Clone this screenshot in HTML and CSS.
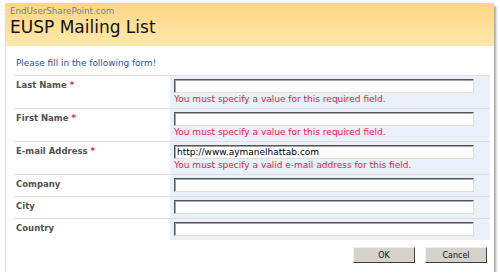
FILE: index.html
```html
<!DOCTYPE html>
<html lang="en">
<head>
  <meta charset="UTF-8" />
  <title>EUSP Mailing List</title>
  <link rel="stylesheet" href="styles.css">
</head>
<body>
  <div class="panel">
    <!-- Yellow title band -->
    <div class="header">
      <div class="site">EndUserSharePoint.com</div>
      <h1>EUSP Mailing List</h1>
    </div>

    <p class="intro">Please fill in the following form!</p>

    <!-- Form rows -->
    <div class="form">
      <div class="row">
        <div class="label">Last Name <span class="req">*</span></div>
        <div class="field">
          <input type="text" value="">
          <div class="error">You must specify a value for this required field.</div>
        </div>
      </div>
      <div class="row">
        <div class="label">First Name <span class="req">*</span></div>
        <div class="field">
          <input type="text" value="">
          <div class="error">You must specify a value for this required field.</div>
        </div>
      </div>
      <div class="row">
        <div class="label">E-mail Address <span class="req">*</span></div>
        <div class="field">
          <input type="text" value="http://www.aymanelhattab.com">
          <div class="error">You must specify a valid e-mail address for this field.</div>
        </div>
      </div>
      <div class="row">
        <div class="label">Company</div>
        <div class="field"><input type="text" value=""></div>
      </div>
      <div class="row">
        <div class="label">City</div>
        <div class="field"><input type="text" value=""></div>
      </div>
      <div class="row">
        <div class="label">Country</div>
        <div class="field"><input type="text" value=""></div>
      </div>
    </div>

    <div class="actions">
      <button>OK</button>
      <button>Cancel</button>
    </div>
  </div>
</body>
</html>
```

FILE: styles.css
```css
/* Reset and Base Styles */
* {
  margin: 0;
  padding: 0;
  box-sizing: border-box;
}
body {
  font-family: "DejaVu Sans", Verdana, sans-serif;
  background-color: #fff;
  padding: 3px 0 0 6px;
}

/* Outer panel with drop shadow */
.panel {
  width: 488px;
  height: 269px;
  background-color: #fff;
  box-shadow: 2px 3px 2px rgba(0, 0, 0, 0.35), -1px 0 1px rgba(0, 0, 0, 0.12);
}

/* Title band */
.header {
  height: 43px;
  padding: 3px 4px 0;
  background: linear-gradient(#ffd681, #ffe8ae);
}
.site {
  font-size: 8.7px;
  color: #5b7fbb;
  line-height: 11px;
}
h1 {
  font-family: "DejaVu Sans", Tahoma, sans-serif;
  font-weight: normal;
  font-size: 17px;
  color: #111;
  line-height: 21px;
}

.intro {
  margin: 11px 0 0 10px;
  font-size: 8.9px;
  line-height: 12px;
  color: #2453a0;
}

/* Form table */
.form {
  margin: 6px 0 0 8px;
  width: 476px;
}
.row {
  display: grid;
  grid-template-columns: 156px 320px;
  border-top: 1px solid #dedede;
}
.label {
  padding: 3px 2px;
  font-size: 8.5px;
  font-weight: bold;
  color: #515151;
  line-height: 12px;
}
.req {
  color: #e8203d;
}
.field {
  background-color: #eaf1fb;
  padding: 3px 4px 4px;
}
.field input {
  display: block;
  width: 300px;
  height: 14px;
  padding: 0 2px;
  font-family: "DejaVu Sans", Verdana, sans-serif;
  font-size: 9px;
  color: #000;
  background: #fff;
  border: 1px solid;
  border-color: #555 #e2dfd6 #e2dfd6 #555;
  box-shadow: inset 1px 1px 0 #a5a5a5;
  outline: none;
}
.error {
  padding-top: 1px;
  margin-bottom: -1px;
  font-size: 9px;
  line-height: 11px;
  color: #e8203d;
}

/* Buttons */
.actions {
  display: flex;
  justify-content: flex-end;
  gap: 10px;
  padding: 7px 7px 0 0;
}
.actions button {
  width: 62px;
  height: 16px;
  font-family: "DejaVu Sans", Tahoma, sans-serif;
  font-size: 8px;
  color: #111;
  background-color: #d6d2ca;
  border: 1px solid;
  border-color: #f2f0ec #3f3f3f #3f3f3f #f2f0ec;
}
```
